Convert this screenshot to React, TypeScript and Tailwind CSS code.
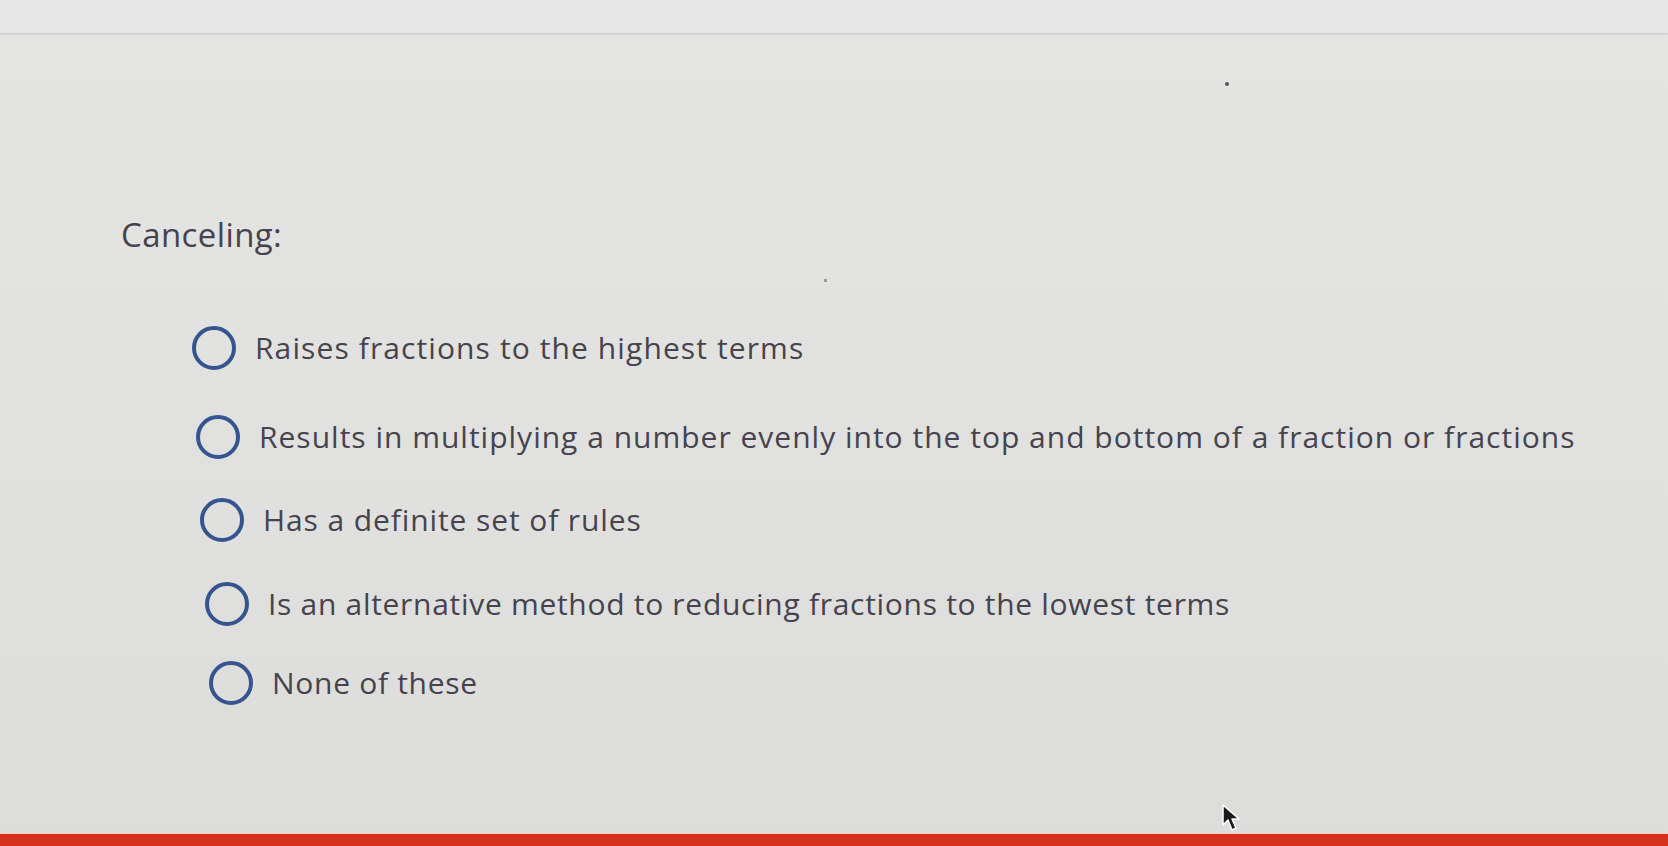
import React from "react";

const options = [
  { text: "Raises fractions to the highest terms", cls: "pl-[192px] mt-0", t: "tracking-[1.1px]" },
  { text: "Results in multiplying a number evenly into the top and bottom of a fraction or fractions", cls: "pl-[196px] mt-[45px]", t: "tracking-[1px]" },
  { text: "Has a definite set of rules", cls: "pl-[200px] mt-[39px]", t: "tracking-[0.9px]" },
  { text: "Is an alternative method to reducing fractions to the lowest terms", cls: "pl-[205px] mt-[40px]", t: "tracking-[0.7px]" },
  { text: "None of these", cls: "pl-[209px] mt-[35px]", t: "tracking-[0.7px]" },
];

export default function App() {
  return (
    <div
      className="relative w-full h-[846px] overflow-hidden bg-gradient-to-b from-[#e5e5e4] via-[#e1e1df] to-[#dcdcda] flex flex-col"
      style={{ fontFamily: "'Open Sans', Lato, sans-serif" }}
    >
      <div className="h-[35px] shrink-0 border-b-2 border-[#d3d3d3] bg-[#e7e7e7]" />
      <div className="flex-1 flex flex-col pt-[180px]">
        <h1 className="pl-[121px] text-[33px] leading-[40px] tracking-[0.4px] text-[#46434e] font-normal">Canceling:</h1>
        <div className="mt-[71px] flex flex-col">
          {options.map((o) => (
            <label key={o.text} className={`flex items-center gap-[19px] ${o.cls}`}>
              <span className="w-[44px] h-[44px] rounded-full border-[4px] border-[#36548f] shrink-0" />
              <span className={`text-[30px] leading-[44px] text-[#46434e] whitespace-nowrap ${o.t}`}>{o.text}</span>
            </label>
          ))}
        </div>
      </div>
      <div className="h-[13px] shrink-0 bg-[#d6311f] border-t border-[#f0d0cc]" />
      <span className="absolute left-[1225px] top-[82px] w-[4px] h-[4px] rounded-full bg-[#55555a]" />
      <span className="absolute left-[824px] top-[279px] w-[3px] h-[3px] bg-[#9a9a9a]" />
      <svg className="absolute left-[1221px] top-[803px]" width="22" height="30" viewBox="0 0 22 30">
        <path d="M2 2 L2 22 L7 17 L11 27 L15 25 L11 16 L18 16 Z" fill="#1d1a1f" stroke="#ffffff" strokeWidth="1.5" strokeLinejoin="round" />
      </svg>
    </div>
  );
}
